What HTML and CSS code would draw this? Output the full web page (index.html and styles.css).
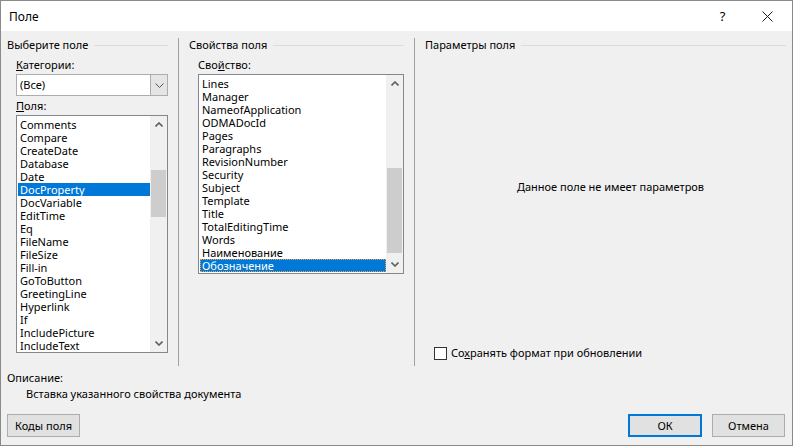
FILE: index.html
```html
<!DOCTYPE html>
<html>
<head>
    <meta charset="utf-8">
    <title>Поле</title>
    <link rel="stylesheet" href="styles.css">
</head>
<body>
    <div class="dialog">
        <div class="titlebar">
            <span class="title">Поле</span>
            <span class="tb-help">?</span>
            <span class="tb-close">
                <svg width="11" height="11" viewBox="0 0 11 11"><path d="M0.5 0.5L10.5 10.5M10.5 0.5L0.5 10.5" stroke="#1a1a1a" stroke-width="1" fill="none"/></svg>
            </span>
        </div>
        <div class="panels">
            <div class="panel panel-fields">
                <div class="group-title"><span>Выберите поле</span></div>
                <div class="field-label"><u>К</u>атегории:</div>
                <div class="combo">
                    <span class="combo-value">(Все)</span>
                    <span class="combo-btn">
                        <svg width="9" height="5" viewBox="0 0 9 5"><path d="M0.5 0.5L4.5 4.5L8.5 0.5" stroke="#555" stroke-width="1" fill="none"/></svg>
                    </span>
                </div>
                <div class="field-label label-list"><u>П</u>оля:</div>
                <div class="listbox list-fields">
                    <ul class="items">
                        <li>Comments</li>
                        <li>Compare</li>
                        <li>CreateDate</li>
                        <li>Database</li>
                        <li>Date</li>
                        <li class="selected">DocProperty</li>
                        <li>DocVariable</li>
                        <li>EditTime</li>
                        <li>Eq</li>
                        <li>FileName</li>
                        <li>FileSize</li>
                        <li>Fill-in</li>
                        <li>GoToButton</li>
                        <li>GreetingLine</li>
                        <li>Hyperlink</li>
                        <li>If</li>
                        <li>IncludePicture</li>
                        <li>IncludeText</li>
                    </ul>
                    <div class="scrollbar">
                        <span class="sb-btn"><svg width="8" height="5" viewBox="0 0 8 5"><path d="M0.5 4.5L4 1L7.5 4.5" stroke="#606060" stroke-width="1.6" fill="none"/></svg></span>
                        <div class="sb-track"><div class="sb-thumb"></div></div>
                        <span class="sb-btn"><svg width="8" height="5" viewBox="0 0 8 5"><path d="M0.5 0.5L4 4L7.5 0.5" stroke="#606060" stroke-width="1.6" fill="none"/></svg></span>
                    </div>
                </div>
            </div>

            <div class="panel panel-props">
                <div class="group-title"><span>Свойства поля</span></div>
                <div class="field-label">Сво<u>й</u>ство:</div>
                <div class="listbox list-props">
                    <ul class="items">
                        <li>Lines</li>
                        <li>Manager</li>
                        <li>NameofApplication</li>
                        <li>ODMADocId</li>
                        <li>Pages</li>
                        <li>Paragraphs</li>
                        <li>RevisionNumber</li>
                        <li>Security</li>
                        <li>Subject</li>
                        <li>Template</li>
                        <li>Title</li>
                        <li>TotalEditingTime</li>
                        <li>Words</li>
                        <li>Наименование</li>
                        <li class="selected focused">Обозначение</li>
                    </ul>
                    <div class="scrollbar">
                        <span class="sb-btn"><svg width="8" height="5" viewBox="0 0 8 5"><path d="M0.5 4.5L4 1L7.5 4.5" stroke="#606060" stroke-width="1.6" fill="none"/></svg></span>
                        <div class="sb-track"><div class="sb-thumb"></div></div>
                        <span class="sb-btn"><svg width="8" height="5" viewBox="0 0 8 5"><path d="M0.5 0.5L4 4L7.5 0.5" stroke="#606060" stroke-width="1.6" fill="none"/></svg></span>
                    </div>
                </div>
            </div>

            <div class="panel panel-params">
                <div class="group-title"><span>Параметры поля</span></div>
                <div class="params-empty">Данное поле не имеет параметров</div>
                <label class="checkbox">
                    <span class="check-box"></span>
                    <span>Со<u>х</u>ранять формат при обновлении</span>
                </label>
            </div>
        </div>

        <div class="description">
            <div>Описание:</div>
            <div class="description-text">Вставка указанного свойства документа</div>
        </div>

        <div class="buttons">
            <button class="btn">Коды поля</button>
            <span class="spacer"></span>
            <button class="btn btn-default">ОК</button>
            <button class="btn">Отмена</button>
        </div>
    </div>
</body>
</html>
```

FILE: styles.css
```css
html, body {
    margin: 0;
    padding: 0;
}

body {
    font-family: 'Noto Sans', 'Open Sans', sans-serif;
    font-size: 11px;
    color: #000000;
    background: #f0f0f0;
}

.dialog {
    width: 793px;
    height: 446px;
    box-sizing: border-box;
    border: 1px solid #8a8a8a;
    background: #f0f0f0;
    display: flex;
    flex-direction: column;
    overflow: hidden;
}

/* title bar */
.titlebar {
    height: 30px;
    background: #ffffff;
    display: flex;
    align-items: center;
    flex-shrink: 0;
}

.title {
    margin-left: 8px;
    flex: 1;
    font-size: 12px;
}

.tb-help {
    width: 45px;
    text-align: center;
    font-size: 13px;
}

.tb-close {
    width: 45px;
    display: flex;
    justify-content: center;
    margin-right: 2px;
}

/* panels */
.panels {
    display: flex;
    height: 328px;
    padding: 7px 0 0 6px;
    flex-shrink: 0;
}

.panel {
    display: flex;
    flex-direction: column;
}

.panel-fields {
    width: 171px;
    border-right: 1px solid #a0a0a0;
    margin-right: 10px;
}

.panel-props {
    width: 225px;
    border-right: 1px solid #a0a0a0;
    margin-right: 10px;
}

.panel-params {
    width: 361px;
}

.group-title {
    display: flex;
    align-items: center;
    height: 14px;
    line-height: 14px;
}

.group-title::after {
    content: "";
    flex: 1;
    height: 0;
    border-top: 1px solid #dcdcdc;
    margin-left: 6px;
    margin-right: 10px;
}

.panel-params .group-title::after {
    margin-right: 0;
}

.field-label {
    margin: 5px 0 0 9px;
    height: 16px;
    line-height: 16px;
}

.label-list {
    margin-top: 2px;
}

/* combo box */
.combo {
    margin: 1px 10px 0 9px;
    height: 22px;
    box-sizing: border-box;
    border: 1px solid #adadad;
    background: #ffffff;
    display: flex;
}

.combo-value {
    flex: 1;
    line-height: 20px;
    padding-left: 3px;
}

.combo-btn {
    width: 16px;
    background: #e5e5e5;
    border-left: 1px solid #adadad;
    display: flex;
    align-items: center;
    justify-content: center;
}

/* list boxes */
.listbox {
    display: flex;
    box-sizing: border-box;
    border: 1px solid #828790;
    background: #ffffff;
    margin-top: 1px;
}

.list-fields {
    margin-left: 9px;
    margin-right: 10px;
    height: 238px;
}

.list-props {
    margin-left: 9px;
    margin-right: 10px;
    height: 200px;
}

.items {
    list-style: none;
    margin: 0;
    padding: 2px 0 0 1px;
    flex: 1;
    overflow: hidden;
}

.items li {
    height: 13px;
    line-height: 13px;
    padding-left: 2px;
    white-space: nowrap;
}

.items li.selected {
    background: #0078d7;
    color: #ffffff;
}

.items li.focused {
    outline: 1px dotted #ff9d3c;
    outline-offset: -1px;
}

/* scroll bars */
.scrollbar {
    width: 17px;
    display: flex;
    flex-direction: column;
    background: #f0f0f0;
}

.sb-btn {
    height: 17px;
    display: flex;
    align-items: center;
    justify-content: center;
    flex-shrink: 0;
}

.sb-track {
    flex: 1;
}

.sb-thumb {
    background: #cdcdcd;
    margin-left: 1px;
    margin-right: 1px;
}

.list-fields .sb-thumb {
    margin-top: 37px;
    height: 47px;
}

.list-props .sb-thumb {
    margin-top: 76px;
    height: 85px;
}

/* parameters */
.params-empty {
    margin-top: 127px;
    padding-left: 10px;
    text-align: center;
    line-height: 16px;
}

.checkbox {
    display: flex;
    align-items: center;
    margin: 150px 0 0 9px;
    line-height: 16px;
}

.check-box {
    width: 11px;
    height: 11px;
    border: 1px solid #333333;
    background: #ffffff;
    margin-right: 4px;
}

/* description */
.description {
    padding: 4px 0 0 6px;
    line-height: 16px;
}

.description-text {
    padding-left: 19px;
}

/* buttons */
.buttons {
    display: flex;
    padding: 12px 7px 0 6px;
    gap: 10px;
}

.spacer {
    flex: 1;
}

.btn {
    font-family: inherit;
    font-size: 11px;
    color: #000000;
    width: 73px;
    height: 23px;
    padding: 0;
    background: #e1e1e1;
    border: 1px solid #adadad;
    box-sizing: border-box;
}

.btn-default {
    width: 74px;
    border: 2px solid #0078d7;
}
```
